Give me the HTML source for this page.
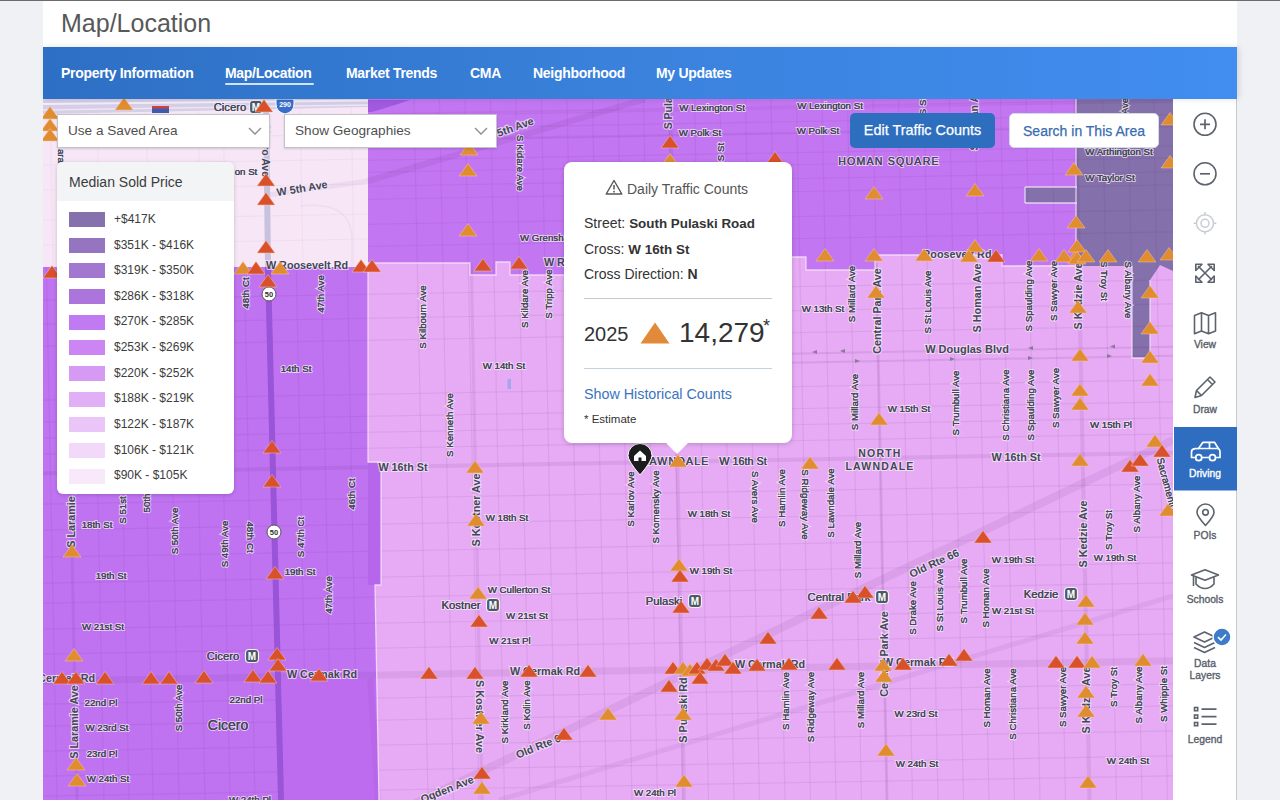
<!DOCTYPE html>
<html><head><meta charset="utf-8">
<style>
*{margin:0;padding:0;box-sizing:border-box}
html,body{width:1280px;height:800px;overflow:hidden;background:#eff1f4;font-family:"Liberation Sans",sans-serif}
#topline{position:absolute;left:0;top:0;width:1280px;height:1px;background:#6b6b6b}
#header{position:absolute;left:43px;top:1px;width:1194px;height:46px;background:#fff}
#title{position:absolute;left:18px;top:8px;font-size:25px;color:#585858;white-space:nowrap}
#nav{position:absolute;left:43px;top:47px;width:1194px;height:52px;background:linear-gradient(90deg,#2d6fc4 0%,#3a82dc 50%,#418df0 100%);box-shadow:2px 0 6px rgba(0,0,0,.12);z-index:2}
.nv{position:absolute;top:18px;font-size:14px;font-weight:bold;color:#fff;letter-spacing:-0.3px;white-space:nowrap}
#ul{position:absolute;left:182px;top:36px;width:89px;height:2px;background:#cfe2ff;border-radius:1px}
#map{position:absolute;left:43px;top:99px;width:1130px;height:701px;overflow:hidden;background:#e6abf4}
#map svg{position:absolute;left:-43px;top:-99px}
#map text.h{fill:#434756;stroke:#f8eefb;stroke-width:2.2px;stroke-opacity:.7;paint-order:stroke;text-anchor:middle;dominant-baseline:central}
#map text.m{fill:#434756;stroke:#434756;stroke-width:.15px;text-anchor:middle;dominant-baseline:central}
#side{position:absolute;left:1173px;top:99px;width:64px;height:701px;background:#fff;border-right:1px solid #c9c9cf}
.dd{position:absolute;top:114px;height:34px;background:#fff;border:1px solid #c4c4c8;box-shadow:0 1px 2px rgba(0,0,0,.15);font-size:13.6px;color:#505050;padding:8px 0 0 10px;white-space:nowrap}
.btn{position:absolute;top:113px;height:35px;border-radius:5px;font-size:15px;-webkit-text-stroke:.25px currentColor;white-space:nowrap;text-align:center;padding-top:9px}
#legend{position:absolute;left:57px;top:162px;width:177px;height:332px;background:#fff;border-radius:6px;box-shadow:0 1px 4px rgba(0,0,0,.18);overflow:hidden}
#lh{height:39px;background:#f3f4f6;font-size:14px;color:#3c3c3c;padding:12px 0 0 12px}
.lr{position:absolute;left:12px;height:15px;width:36px}
.lt{position:absolute;left:57px;font-size:12px;color:#3c3c3c;white-space:nowrap}
#pop{position:absolute;left:564px;top:162px;width:228px;height:281px;background:#fff;border-radius:8px;box-shadow:0 1px 5px rgba(0,0,0,.2)}
#pop .t{position:absolute;white-space:nowrap;color:#333}
.sl{position:absolute;width:64px;text-align:center;font-size:10.3px;color:#59606b;-webkit-text-stroke:0.35px currentColor}
</style></head>
<body>
<div id="topline"></div>
<div id="header"><div id="title">Map/Location</div></div>
<div id="nav">
<div class="nv" style="left:18px">Property Information</div>
<div class="nv" style="left:182px">Map/Location</div>
<div class="nv" style="left:303px">Market Trends</div>
<div class="nv" style="left:427px">CMA</div>
<div class="nv" style="left:490px">Neighborhood</div>
<div class="nv" style="left:613px">My Updates</div>
<div id="ul"></div>
</div>
<div id="map"><svg width="1280" height="800" viewBox="0 0 1280 800" font-family="Liberation Sans, sans-serif"><polygon points="43,99 368,99 368,267 43,267" fill="#f6e6f6" /><polygon points="368,99 1076,99 1076,265 1002,266 1002,255 875,255 875,270 806,270 806,257 700,257 564,262 564,275 510,275 510,262 496,262 496,275 470,275 470,263 368,263" fill="#c376f1" /><polygon points="1076,99 1173,99 1173,271 1160,265 1150,280 1150,358 1132,358 1132,266 1076,266" fill="#8470aa" /><polygon points="1025,187 1077,187 1077,203 1025,203" fill="#8470aa" /><polygon points="43,267 368,267 368,462 381,462 381,585 375,585 379,800 43,800" fill="#bf73f1" /><polygon points="282,678 375,678 378,800 282,800" fill="#bd6cef" /><polygon points="368,463 381,463 381,585 368,585" fill="#b566ea" /><g stroke="#6a2a8a" stroke-opacity="0.09" stroke-width="1.2"><line x1="413.98" y1="99" x2="428" y2="800"/><line x1="439.48" y1="99" x2="453.5" y2="800"/><line x1="464.98" y1="99" x2="479" y2="800"/><line x1="490.48" y1="99" x2="504.5" y2="800"/><line x1="515.98" y1="99" x2="530" y2="800"/><line x1="541.48" y1="99" x2="555.5" y2="800"/><line x1="566.98" y1="99" x2="581" y2="800"/><line x1="592.48" y1="99" x2="606.5" y2="800"/><line x1="617.98" y1="99" x2="632" y2="800"/><line x1="643.48" y1="99" x2="657.5" y2="800"/><line x1="668.98" y1="99" x2="683" y2="800"/><line x1="694.48" y1="99" x2="708.5" y2="800"/><line x1="719.98" y1="99" x2="734" y2="800"/><line x1="745.48" y1="99" x2="759.5" y2="800"/><line x1="770.98" y1="99" x2="785" y2="800"/><line x1="796.48" y1="99" x2="810.5" y2="800"/><line x1="821.98" y1="99" x2="836" y2="800"/><line x1="847.48" y1="99" x2="861.5" y2="800"/><line x1="872.98" y1="99" x2="887" y2="800"/><line x1="898.48" y1="99" x2="912.5" y2="800"/><line x1="923.98" y1="99" x2="938" y2="800"/><line x1="949.48" y1="99" x2="963.5" y2="800"/><line x1="974.98" y1="99" x2="989" y2="800"/><line x1="1000.48" y1="99" x2="1014.5" y2="800"/><line x1="1025.98" y1="99" x2="1040" y2="800"/><line x1="1051.48" y1="99" x2="1065.5" y2="800"/><line x1="1076.98" y1="99" x2="1091" y2="800"/><line x1="1102.48" y1="99" x2="1116.5" y2="800"/><line x1="1127.98" y1="99" x2="1142" y2="800"/><line x1="1153.48" y1="99" x2="1167.5" y2="800"/><line x1="1178.98" y1="99" x2="1193" y2="800"/><line x1="42.98" y1="99" x2="57" y2="800"/><line x1="89.98" y1="99" x2="104" y2="800"/><line x1="114.98" y1="99" x2="129" y2="800"/><line x1="138.98" y1="99" x2="153" y2="800"/><line x1="164.98" y1="99" x2="179" y2="800"/><line x1="190.98" y1="99" x2="205" y2="800"/><line x1="215.98" y1="99" x2="230" y2="800"/><line x1="240.98" y1="99" x2="255" y2="800"/><line x1="292.98" y1="99" x2="307" y2="800"/><line x1="317.98" y1="99" x2="332" y2="800"/><line x1="343.98" y1="99" x2="358" y2="800"/><line x1="43" y1="122.17" x2="1173" y2="101.83"/><line x1="43" y1="135.17" x2="1173" y2="114.83"/><line x1="43" y1="147.17" x2="1173" y2="126.83"/><line x1="43" y1="166.17" x2="1173" y2="145.83"/><line x1="43" y1="178.17" x2="1173" y2="157.83"/><line x1="43" y1="192.17" x2="1173" y2="171.83"/><line x1="43" y1="205.17" x2="1173" y2="184.83"/><line x1="43" y1="230.17" x2="1173" y2="209.83"/><line x1="43" y1="252.17" x2="1173" y2="231.83"/><line x1="43" y1="300.17" x2="1173" y2="279.83"/><line x1="43" y1="324.17" x2="1173" y2="303.83"/><line x1="43" y1="346.17" x2="1173" y2="325.83"/><line x1="43" y1="400.17" x2="1173" y2="379.83"/><line x1="43" y1="422.17" x2="1173" y2="401.83"/><line x1="43" y1="438.17" x2="1173" y2="417.83"/><line x1="43" y1="454.17" x2="1173" y2="433.83"/><line x1="43" y1="504.17" x2="1173" y2="483.83"/><line x1="43" y1="530.17" x2="1173" y2="509.83"/><line x1="43" y1="557.17" x2="1173" y2="536.83"/><line x1="43" y1="583.17" x2="1173" y2="562.83"/><line x1="43" y1="603.17" x2="1173" y2="582.83"/><line x1="43" y1="629.17" x2="1173" y2="608.83"/><line x1="43" y1="654.17" x2="1173" y2="633.83"/><line x1="43" y1="704.17" x2="1173" y2="683.83"/><line x1="43" y1="726.17" x2="1173" y2="705.83"/><line x1="43" y1="751.17" x2="1173" y2="730.83"/><line x1="43" y1="776.17" x2="1173" y2="755.83"/><line x1="43" y1="796.17" x2="1173" y2="775.83"/></g><line x1="43" y1="473.17" x2="1173" y2="452.83" stroke="#6a2a8a" stroke-width="4" stroke-opacity="0.1" /><line x1="43" y1="681.17" x2="1173" y2="660.83" stroke="#6a2a8a" stroke-width="7" stroke-opacity="0.09" /><line x1="700" y1="355.344" x2="1173" y2="346.83" stroke="#6a2a8a" stroke-width="2" stroke-opacity="0.12" /><line x1="700" y1="364.344" x2="1173" y2="355.83" stroke="#6a2a8a" stroke-width="2" stroke-opacity="0.12" /><line x1="471.26" y1="263" x2="482" y2="800" stroke="#6a2a8a" stroke-width="3" stroke-opacity="0.1" /><line x1="669.98" y1="99" x2="684" y2="800" stroke="#6a2a8a" stroke-width="4" stroke-opacity="0.1" /><line x1="876.26" y1="263" x2="887" y2="800" stroke="#6a2a8a" stroke-width="3" stroke-opacity="0.1" /><line x1="1074.98" y1="99" x2="1089" y2="800" stroke="#6a2a8a" stroke-width="3" stroke-opacity="0.1" /><line x1="66.34" y1="267" x2="77" y2="800" stroke="#6a2a8a" stroke-width="3" stroke-opacity="0.1" /><line x1="380" y1="820" x2="1173" y2="440" stroke="#6a2a8a" stroke-width="8" stroke-opacity="0.09" /><line x1="499" y1="800" x2="1173" y2="596" stroke="#6a2a8a" stroke-width="5" stroke-opacity="0.07" /><line x1="368" y1="114.32" x2="1173" y2="99.83" stroke="#6a2a8a" stroke-width="2" stroke-opacity="0.08" /><line x1="368" y1="140.32" x2="1173" y2="125.83" stroke="#6a2a8a" stroke-width="2" stroke-opacity="0.08" /><polygon points="282,678 375,678 378,800 282,800" fill="#bd6cef" /><polygon points="368,463 381,463 381,585 368,585" fill="#b566ea" /><line x1="370" y1="678" x2="378" y2="800" stroke="#6a2a8a" stroke-width="6" stroke-opacity="0.06" /><polygon points="43,99 368,99 368,267 43,267" fill="#f6e6f6" /><g stroke="#6a2a8a" stroke-opacity="0.035" stroke-width="1.2"><line x1="50" y1="99" x2="53" y2="267"/><line x1="97" y1="99" x2="100" y2="267"/><line x1="146" y1="99" x2="149" y2="267"/><line x1="198" y1="99" x2="201" y2="267"/><line x1="223" y1="99" x2="226" y2="267"/><line x1="300" y1="99" x2="303" y2="267"/><line x1="351" y1="99" x2="354" y2="267"/><line x1="43" y1="140" x2="368" y2="134"/><line x1="43" y1="165" x2="368" y2="159"/><line x1="43" y1="190" x2="368" y2="184"/><line x1="43" y1="220" x2="368" y2="214"/><line x1="43" y1="245" x2="368" y2="239"/></g><path d="M300 206Q352 200 352 240V267" fill="none" stroke="#6a2a8a" stroke-opacity="0.05" stroke-width="1.5"/><line x1="268" y1="195" x2="368" y2="181" stroke="#6a2a8a" stroke-opacity="0.06" stroke-width="5"/><line x1="368" y1="181" x2="645" y2="99" stroke="#6a2a8a" stroke-opacity="0.11" stroke-width="6"/><polyline points="368,263 470,263 470,275 496,275 496,262 510,262 510,275 564,275" fill="none" stroke="#f6e6fa" stroke-opacity="0.8" stroke-width="1.3"/><polyline points="792,257 806,257 806,270 875,270 875,255 1002,255 1002,266 1076,266 1076,99" fill="none" stroke="#f6e6fa" stroke-opacity="0.8" stroke-width="1.3"/><polyline points="368,267 368,462 381,462 381,585 375,585 379,800" fill="none" stroke="#f6e6fa" stroke-opacity="0.8" stroke-width="1.3"/><polyline points="1025,187 1077,187" fill="none" stroke="#f6e6fa" stroke-opacity="0.8" stroke-width="1.3"/><polyline points="1025,203 1077,203" fill="none" stroke="#f6e6fa" stroke-opacity="0.8" stroke-width="1.3"/><polyline points="1025,187 1025,203" fill="none" stroke="#f6e6fa" stroke-opacity="0.8" stroke-width="1.3"/><polyline points="1132,266 1132,358 1150,358 1150,280" fill="none" stroke="#f6e6fa" stroke-opacity="0.8" stroke-width="1.3"/><rect x="507.5" y="379" width="3.5" height="10" fill="#a4a6ee"/><path d="M812 352l5 -2v4z" fill="#8a7a9a"/><path d="M840 351l5 -2v4z" fill="#8a7a9a"/><path d="M930 349.5l5 -2v4z" fill="#8a7a9a"/><path d="M1028 348l5 -2v4z" fill="#8a7a9a"/><path d="M860 361l-5 -2v4z" fill="#8a7a9a"/><path d="M955 359l-5 -2v4z" fill="#8a7a9a"/><path d="M1033 358l-5 -2v4z" fill="#8a7a9a"/><path d="M1110 346.5l5 -2v4z" fill="#8a7a9a"/><path d="M1112 356l-5 -2v4z" fill="#8a7a9a"/><line x1="266" y1="99" x2="268" y2="267" stroke="#c9c2de" stroke-width="6"/><line x1="268" y1="267" x2="281" y2="800" stroke="#9a54d8" stroke-width="6"/><polygon points="368,100 410,100 395,105 372,112 368,112" fill="#9a55dc" fill-opacity="0.85"/><polygon points="43,99 368,99 368,107 43,114" fill="#d6cde6"/><line x1="43" y1="104" x2="368" y2="100.5" stroke="#f2eef8" stroke-width="2"/><line x1="43" y1="110" x2="368" y2="105" stroke="#ece6f4" stroke-width="1.5"/><text class="h" x="230" y="107" font-size="11.3">Cicero</text><text class="m" x="230" y="107" font-size="11.3">Cicero</text><text class="h" x="246" y="171" font-size="9.7">on St</text><text class="m" x="246" y="171" font-size="9.7">on St</text><text class="h" x="302" y="188" font-size="10.8" font-weight="bold" transform="rotate(-9 302 188)">W 5th Ave</text><text class="h" x="266" y="150" font-size="10.5" font-weight="bold" transform="rotate(90 266 150)">Cicero Ave</text><text class="h" x="61" y="156" font-size="9.7" transform="rotate(90 61 156)">ara</text><text class="m" x="61" y="156" font-size="9.7" transform="rotate(90 61 156)">ara</text><text class="h" x="307" y="265" font-size="10.8" font-weight="bold">W Roosevelt Rd</text><text class="h" x="245" y="293" font-size="9.7" transform="rotate(-90 245 293)">48th Ct</text><text class="m" x="245" y="293" font-size="9.7" transform="rotate(-90 245 293)">48th Ct</text><text class="h" x="320" y="294" font-size="9.7" transform="rotate(-90 320 294)">47th Ave</text><text class="m" x="320" y="294" font-size="9.7" transform="rotate(-90 320 294)">47th Ave</text><text class="h" x="422" y="317" font-size="9.7" transform="rotate(-90 422 317)">S Kilbourn Ave</text><text class="m" x="422" y="317" font-size="9.7" transform="rotate(-90 422 317)">S Kilbourn Ave</text><text class="h" x="520" y="163" font-size="9.7" transform="rotate(90 520 163)">S Kidare Ave</text><text class="m" x="520" y="163" font-size="9.7" transform="rotate(90 520 163)">S Kidare Ave</text><text class="h" x="509" y="129" font-size="10.8" font-weight="bold" transform="rotate(-20 509 129)">W 5th Ave</text><text class="h" x="668" y="106" font-size="10.5" font-weight="bold" transform="rotate(-90 668 106)">S Pulaski</text><text class="h" x="712" y="107" font-size="9.7">W Lexington St</text><text class="m" x="712" y="107" font-size="9.7">W Lexington St</text><text class="h" x="700" y="132" font-size="9.7">W Polk St</text><text class="m" x="700" y="132" font-size="9.7">W Polk St</text><text class="h" x="720" y="152" font-size="9.7" transform="rotate(-90 720 152)">S St</text><text class="m" x="720" y="152" font-size="9.7" transform="rotate(-90 720 152)">S St</text><text class="h" x="830" y="105" font-size="9.7">W Lexington St</text><text class="m" x="830" y="105" font-size="9.7">W Lexington St</text><text class="h" x="818" y="130" font-size="9.7">W Polk St</text><text class="m" x="818" y="130" font-size="9.7">W Polk St</text><text class="h" x="889" y="161" font-size="10.6" letter-spacing="1.2">HOMAN SQUARE</text><text class="m" x="889" y="161" font-size="10.6" letter-spacing="1.2">HOMAN SQUARE</text><text class="h" x="1119" y="151" font-size="9.7">W Arthington St</text><text class="m" x="1119" y="151" font-size="9.7">W Arthington St</text><text class="h" x="1110" y="177" font-size="9.7">W Taylor St</text><text class="m" x="1110" y="177" font-size="9.7">W Taylor St</text><text class="h" x="922" y="106" font-size="9.7" transform="rotate(-90 922 106)">S St</text><text class="m" x="922" y="106" font-size="9.7" transform="rotate(-90 922 106)">S St</text><text class="h" x="974" y="120" font-size="10.5" font-weight="bold" transform="rotate(-90 974 120)">S Homan Av</text><text class="h" x="1124" y="106" font-size="9.7" transform="rotate(-90 1124 106)">Ave</text><text class="m" x="1124" y="106" font-size="9.7" transform="rotate(-90 1124 106)">Ave</text><text class="h" x="548" y="237" font-size="9.7">W Grenshaw</text><text class="m" x="548" y="237" font-size="9.7">W Grenshaw</text><text class="h" x="585" y="262" font-size="10.8" font-weight="bold">W Roosevelt Rd</text><text class="h" x="957" y="254" font-size="10.8" font-weight="bold">Roosevelt Rd</text><text class="h" x="524" y="299" font-size="9.7" transform="rotate(-90 524 299)">S Kildare Ave</text><text class="m" x="524" y="299" font-size="9.7" transform="rotate(-90 524 299)">S Kildare Ave</text><text class="h" x="548" y="294" font-size="9.7" transform="rotate(-90 548 294)">S Tripp Ave</text><text class="m" x="548" y="294" font-size="9.7" transform="rotate(-90 548 294)">S Tripp Ave</text><text class="h" x="504" y="365" font-size="9.7">W 14th St</text><text class="m" x="504" y="365" font-size="9.7">W 14th St</text><text class="h" x="449" y="425" font-size="9.7" transform="rotate(-90 449 425)">S Kenneth Ave</text><text class="m" x="449" y="425" font-size="9.7" transform="rotate(-90 449 425)">S Kenneth Ave</text><text class="h" x="403" y="467" font-size="10.8" font-weight="bold">W 16th St</text><text class="h" x="823" y="308" font-size="9.7">W 13th St</text><text class="m" x="823" y="308" font-size="9.7">W 13th St</text><text class="h" x="851" y="294" font-size="9.7" transform="rotate(-90 851 294)">S Millard Ave</text><text class="m" x="851" y="294" font-size="9.7" transform="rotate(-90 851 294)">S Millard Ave</text><text class="h" x="877" y="311" font-size="10.8" font-weight="bold" transform="rotate(-90 877 311)">Central Park Ave</text><text class="h" x="927" y="302" font-size="9.7" transform="rotate(-90 927 302)">S St Louis Ave</text><text class="m" x="927" y="302" font-size="9.7" transform="rotate(-90 927 302)">S St Louis Ave</text><text class="h" x="977" y="298" font-size="10.8" font-weight="bold" transform="rotate(-90 977 298)">S Homan Ave</text><text class="h" x="1028" y="296" font-size="9.7" transform="rotate(-90 1028 296)">S Spaulding Ave</text><text class="m" x="1028" y="296" font-size="9.7" transform="rotate(-90 1028 296)">S Spaulding Ave</text><text class="h" x="1053" y="291" font-size="9.7" transform="rotate(-90 1053 291)">S Sawyer Ave</text><text class="m" x="1053" y="291" font-size="9.7" transform="rotate(-90 1053 291)">S Sawyer Ave</text><text class="h" x="1078" y="296" font-size="10.8" font-weight="bold" transform="rotate(-90 1078 296)">S Kedzie Ave</text><text class="h" x="1104" y="281" font-size="9.7" transform="rotate(90 1104 281)">S Troy St</text><text class="m" x="1104" y="281" font-size="9.7" transform="rotate(90 1104 281)">S Troy St</text><text class="h" x="1128.6" y="290" font-size="9.7" transform="rotate(90 1128.6 290)">S Albany Ave</text><text class="m" x="1128.6" y="290" font-size="9.7" transform="rotate(90 1128.6 290)">S Albany Ave</text><text class="h" x="967" y="349" font-size="11" font-weight="bold">W Douglas Blvd</text><text class="h" x="854" y="402" font-size="9.7" transform="rotate(-90 854 402)">S Millard Ave</text><text class="m" x="854" y="402" font-size="9.7" transform="rotate(-90 854 402)">S Millard Ave</text><text class="h" x="909" y="408" font-size="9.7">W 15th St</text><text class="m" x="909" y="408" font-size="9.7">W 15th St</text><text class="h" x="955" y="403" font-size="9.7" transform="rotate(-90 955 403)">S Trumbull Ave</text><text class="m" x="955" y="403" font-size="9.7" transform="rotate(-90 955 403)">S Trumbull Ave</text><text class="h" x="1005" y="405" font-size="9.7" transform="rotate(-90 1005 405)">S Christiana Ave</text><text class="m" x="1005" y="405" font-size="9.7" transform="rotate(-90 1005 405)">S Christiana Ave</text><text class="h" x="1030" y="405" font-size="9.7" transform="rotate(-90 1030 405)">S Spaulding Ave</text><text class="m" x="1030" y="405" font-size="9.7" transform="rotate(-90 1030 405)">S Spaulding Ave</text><text class="h" x="1055" y="398" font-size="9.7" transform="rotate(-90 1055 398)">S Sawyer Ave</text><text class="m" x="1055" y="398" font-size="9.7" transform="rotate(-90 1055 398)">S Sawyer Ave</text><text class="h" x="1111" y="424" font-size="9.7">W 15th Pl</text><text class="m" x="1111" y="424" font-size="9.7">W 15th Pl</text><text class="h" x="880" y="453" font-size="10.5" font-weight="bold" letter-spacing="1.2">NORTH</text><text class="h" x="880" y="466" font-size="10.5" font-weight="bold" letter-spacing="1.2">LAWNDALE</text><text class="h" x="1016" y="457" font-size="10.8" font-weight="bold">W 16th St</text><text class="h" x="805" y="504.5" font-size="9.7" transform="rotate(90 805 504.5)">S Ridgeway Ave</text><text class="m" x="805" y="504.5" font-size="9.7" transform="rotate(90 805 504.5)">S Ridgeway Ave</text><text class="h" x="830" y="503" font-size="9.7" transform="rotate(-90 830 503)">S Lawndale Ave</text><text class="m" x="830" y="503" font-size="9.7" transform="rotate(-90 830 503)">S Lawndale Ave</text><text class="h" x="781" y="498" font-size="9.7" transform="rotate(-90 781 498)">S Hamlin Ave</text><text class="m" x="781" y="498" font-size="9.7" transform="rotate(-90 781 498)">S Hamlin Ave</text><text class="h" x="857" y="550" font-size="9.7" transform="rotate(-90 857 550)">S Millard Ave</text><text class="m" x="857" y="550" font-size="9.7" transform="rotate(-90 857 550)">S Millard Ave</text><text class="h" x="934" y="563" font-size="10.8" font-weight="bold" transform="rotate(-25 934 563)">Old Rte 66</text><text class="h" x="1013" y="559" font-size="9.7">W 19th St</text><text class="m" x="1013" y="559" font-size="9.7">W 19th St</text><text class="h" x="1083" y="534" font-size="10.8" font-weight="bold" transform="rotate(-90 1083 534)">S Kedzie Ave</text><text class="h" x="1108" y="530" font-size="9.7" transform="rotate(-90 1108 530)">S Troy St</text><text class="m" x="1108" y="530" font-size="9.7" transform="rotate(-90 1108 530)">S Troy St</text><text class="h" x="1136" y="504" font-size="9.7" transform="rotate(-90 1136 504)">S Albany Ave</text><text class="m" x="1136" y="504" font-size="9.7" transform="rotate(-90 1136 504)">S Albany Ave</text><text class="h" x="1115" y="557" font-size="9.7">W 19th St</text><text class="m" x="1115" y="557" font-size="9.7">W 19th St</text><text class="h" x="1167" y="484" font-size="10" transform="rotate(75 1167 484)">Sacramento</text><text class="m" x="1167" y="484" font-size="10" transform="rotate(75 1167 484)">Sacramento</text><text class="h" x="71" y="511" font-size="10.8" font-weight="bold" transform="rotate(-90 71 511)">S Laramie Ave</text><text class="h" x="122" y="510" font-size="9.7" transform="rotate(-90 122 510)">S 51st</text><text class="m" x="122" y="510" font-size="9.7" transform="rotate(-90 122 510)">S 51st</text><text class="h" x="146" y="503" font-size="9.7" transform="rotate(-90 146 503)">50th</text><text class="m" x="146" y="503" font-size="9.7" transform="rotate(-90 146 503)">50th</text><text class="h" x="97" y="524" font-size="9.7">18th St</text><text class="m" x="97" y="524" font-size="9.7">18th St</text><text class="h" x="174" y="531" font-size="9.7" transform="rotate(-90 174 531)">S 50th Ave</text><text class="m" x="174" y="531" font-size="9.7" transform="rotate(-90 174 531)">S 50th Ave</text><text class="h" x="224" y="544" font-size="9.7" transform="rotate(-90 224 544)">S 49th Ave</text><text class="m" x="224" y="544" font-size="9.7" transform="rotate(-90 224 544)">S 49th Ave</text><text class="h" x="250" y="537" font-size="9.7" transform="rotate(90 250 537)">48th Ct</text><text class="m" x="250" y="537" font-size="9.7" transform="rotate(90 250 537)">48th Ct</text><text class="h" x="300" y="537" font-size="9.7" transform="rotate(-90 300 537)">S 47th Ct</text><text class="m" x="300" y="537" font-size="9.7" transform="rotate(-90 300 537)">S 47th Ct</text><text class="h" x="351" y="494" font-size="9.7" transform="rotate(-90 351 494)">46th Ct</text><text class="m" x="351" y="494" font-size="9.7" transform="rotate(-90 351 494)">46th Ct</text><text class="h" x="296" y="368" font-size="9.7">14th St</text><text class="m" x="296" y="368" font-size="9.7">14th St</text><text class="h" x="111" y="575" font-size="9.7">19th St</text><text class="m" x="111" y="575" font-size="9.7">19th St</text><text class="h" x="300" y="571" font-size="9.7">19th St</text><text class="m" x="300" y="571" font-size="9.7">19th St</text><text class="h" x="328" y="595" font-size="9.7" transform="rotate(-90 328 595)">47th Ave</text><text class="m" x="328" y="595" font-size="9.7" transform="rotate(-90 328 595)">47th Ave</text><text class="h" x="103" y="626" font-size="9.7">W 21st St</text><text class="m" x="103" y="626" font-size="9.7">W 21st St</text><text class="h" x="223" y="656" font-size="11.3">Cicero</text><text class="m" x="223" y="656" font-size="11.3">Cicero</text><text class="h" x="322" y="674" font-size="10.8" font-weight="bold">W Cermak Rd</text><text class="h" x="60" y="678" font-size="10.8" font-weight="bold">W Cermak Rd</text><text class="h" x="101" y="702" font-size="9.7">22nd Pl</text><text class="m" x="101" y="702" font-size="9.7">22nd Pl</text><text class="h" x="246" y="699" font-size="9.7">22nd Pl</text><text class="m" x="246" y="699" font-size="9.7">22nd Pl</text><text class="h" x="178" y="708" font-size="9.7" transform="rotate(-90 178 708)">S 50th Ave</text><text class="m" x="178" y="708" font-size="9.7" transform="rotate(-90 178 708)">S 50th Ave</text><text class="h" x="74" y="722" font-size="10.8" font-weight="bold" transform="rotate(-90 74 722)">S Laramie Ave</text><text class="h" x="228" y="725" font-size="14">Cicero</text><text class="m" x="228" y="725" font-size="14">Cicero</text><text class="h" x="107" y="727" font-size="9.7">W 23rd St</text><text class="m" x="107" y="727" font-size="9.7">W 23rd St</text><text class="h" x="102" y="753" font-size="9.7">23rd Pl</text><text class="m" x="102" y="753" font-size="9.7">23rd Pl</text><text class="h" x="108" y="778" font-size="9.7">W 24th St</text><text class="m" x="108" y="778" font-size="9.7">W 24th St</text><text class="h" x="250" y="799" font-size="9.7">W 24th Pl</text><text class="m" x="250" y="799" font-size="9.7">W 24th Pl</text><text class="h" x="476" y="510" font-size="10.8" font-weight="bold" transform="rotate(-90 476 510)">S Kostner Ave</text><text class="h" x="507" y="517" font-size="9.7">W 18th St</text><text class="m" x="507" y="517" font-size="9.7">W 18th St</text><text class="h" x="630" y="499" font-size="9.7" transform="rotate(-90 630 499)">S Karlov Ave</text><text class="m" x="630" y="499" font-size="9.7" transform="rotate(-90 630 499)">S Karlov Ave</text><text class="h" x="655" y="507" font-size="9.7" transform="rotate(-90 655 507)">S Komensky Ave</text><text class="m" x="655" y="507" font-size="9.7" transform="rotate(-90 655 507)">S Komensky Ave</text><text class="h" x="676" y="461" font-size="10.5" letter-spacing="1.2">LAWNDALE</text><text class="m" x="676" y="461" font-size="10.5" letter-spacing="1.2">LAWNDALE</text><text class="h" x="743" y="461" font-size="10.8">W 16th St</text><text class="m" x="743" y="461" font-size="10.8">W 16th St</text><text class="h" x="755" y="497" font-size="9.7" transform="rotate(90 755 497)">S Avers Ave</text><text class="m" x="755" y="497" font-size="9.7" transform="rotate(90 755 497)">S Avers Ave</text><text class="h" x="709" y="513" font-size="9.7">W 18th St</text><text class="m" x="709" y="513" font-size="9.7">W 18th St</text><text class="h" x="711" y="570" font-size="9.7">W 19th St</text><text class="m" x="711" y="570" font-size="9.7">W 19th St</text><text class="h" x="519" y="589" font-size="9.7">W Cullerton St</text><text class="m" x="519" y="589" font-size="9.7">W Cullerton St</text><text class="h" x="461" y="605" font-size="11.3">Kostner</text><text class="m" x="461" y="605" font-size="11.3">Kostner</text><text class="h" x="527" y="615" font-size="9.7">W 21st St</text><text class="m" x="527" y="615" font-size="9.7">W 21st St</text><text class="h" x="510" y="640" font-size="9.7">W 21st Pl</text><text class="m" x="510" y="640" font-size="9.7">W 21st Pl</text><text class="h" x="664" y="601" font-size="11.3">Pulaski</text><text class="m" x="664" y="601" font-size="11.3">Pulaski</text><text class="h" x="545" y="671" font-size="10.8" font-weight="bold">W Cermak Rd</text><text class="h" x="770" y="664" font-size="10.8" font-weight="bold">W Cermak Rd</text><text class="h" x="480" y="716.5" font-size="10.8" font-weight="bold" transform="rotate(90 480 716.5)">S Kostner Ave</text><text class="h" x="504" y="712" font-size="9.7" transform="rotate(-90 504 712)">S Kirkland Ave</text><text class="m" x="504" y="712" font-size="9.7" transform="rotate(-90 504 712)">S Kirkland Ave</text><text class="h" x="526" y="705" font-size="9.7" transform="rotate(-90 526 705)">S Kolin Ave</text><text class="m" x="526" y="705" font-size="9.7" transform="rotate(-90 526 705)">S Kolin Ave</text><text class="h" x="541" y="745" font-size="10.8" font-weight="bold" transform="rotate(-22 541 745)">Old Rte 66</text><text class="h" x="447" y="789" font-size="10.8" font-weight="bold" transform="rotate(-22 447 789)">Ogden Ave</text><text class="h" x="683" y="710" font-size="10.8" font-weight="bold" transform="rotate(-90 683 710)">S Pulaski Rd</text><text class="h" x="655" y="792" font-size="9.7">W 24th Pl</text><text class="m" x="655" y="792" font-size="9.7">W 24th Pl</text><text class="h" x="912" y="608" font-size="9.7" transform="rotate(-90 912 608)">S Drake Ave</text><text class="m" x="912" y="608" font-size="9.7" transform="rotate(-90 912 608)">S Drake Ave</text><text class="h" x="939" y="600" font-size="9.7" transform="rotate(-90 939 600)">S St Louis Ave</text><text class="m" x="939" y="600" font-size="9.7" transform="rotate(-90 939 600)">S St Louis Ave</text><text class="h" x="963" y="591" font-size="9.7" transform="rotate(-90 963 591)">S Trumbull Ave</text><text class="m" x="963" y="591" font-size="9.7" transform="rotate(-90 963 591)">S Trumbull Ave</text><text class="h" x="985" y="598" font-size="9.7" transform="rotate(-90 985 598)">S Homan Ave</text><text class="m" x="985" y="598" font-size="9.7" transform="rotate(-90 985 598)">S Homan Ave</text><text class="h" x="1013" y="610" font-size="9.7">W 21st St</text><text class="m" x="1013" y="610" font-size="9.7">W 21st St</text><text class="h" x="839" y="597" font-size="11.3">Central Park</text><text class="m" x="839" y="597" font-size="11.3">Central Park</text><text class="h" x="1041" y="594" font-size="11.3">Kedzie</text><text class="m" x="1041" y="594" font-size="11.3">Kedzie</text><text class="h" x="884" y="654" font-size="10.8" font-weight="bold" transform="rotate(-90 884 654)">Central Park Ave</text><text class="h" x="918" y="662" font-size="10.8" font-weight="bold">W Cermak Rd</text><text class="h" x="785" y="701" font-size="9.7" transform="rotate(-90 785 701)">S Hamlin Ave</text><text class="m" x="785" y="701" font-size="9.7" transform="rotate(-90 785 701)">S Hamlin Ave</text><text class="h" x="810" y="707" font-size="9.7" transform="rotate(-90 810 707)">S Ridgeway Ave</text><text class="m" x="810" y="707" font-size="9.7" transform="rotate(-90 810 707)">S Ridgeway Ave</text><text class="h" x="860" y="700" font-size="9.7" transform="rotate(-90 860 700)">S Millard Ave</text><text class="m" x="860" y="700" font-size="9.7" transform="rotate(-90 860 700)">S Millard Ave</text><text class="h" x="916" y="713" font-size="9.7">W 23rd St</text><text class="m" x="916" y="713" font-size="9.7">W 23rd St</text><text class="h" x="986" y="698" font-size="9.7" transform="rotate(-90 986 698)">S Homan Ave</text><text class="m" x="986" y="698" font-size="9.7" transform="rotate(-90 986 698)">S Homan Ave</text><text class="h" x="1012" y="704" font-size="9.7" transform="rotate(-90 1012 704)">S Christiana Ave</text><text class="m" x="1012" y="704" font-size="9.7" transform="rotate(-90 1012 704)">S Christiana Ave</text><text class="h" x="1062" y="697" font-size="9.7" transform="rotate(-90 1062 697)">S Sawyer Ave</text><text class="m" x="1062" y="697" font-size="9.7" transform="rotate(-90 1062 697)">S Sawyer Ave</text><text class="h" x="1086" y="700" font-size="10.8" font-weight="bold" transform="rotate(-90 1086 700)">S Kedzie Ave</text><text class="h" x="1113" y="687" font-size="9.7" transform="rotate(-90 1113 687)">S Troy St</text><text class="m" x="1113" y="687" font-size="9.7" transform="rotate(-90 1113 687)">S Troy St</text><text class="h" x="1138" y="695" font-size="9.7" transform="rotate(-90 1138 695)">S Albany Ave</text><text class="m" x="1138" y="695" font-size="9.7" transform="rotate(-90 1138 695)">S Albany Ave</text><text class="h" x="1163" y="694" font-size="9.7" transform="rotate(-90 1163 694)">S Whipple St</text><text class="m" x="1163" y="694" font-size="9.7" transform="rotate(-90 1163 694)">S Whipple St</text><text class="h" x="917" y="763" font-size="9.7">W 24th St</text><text class="m" x="917" y="763" font-size="9.7">W 24th St</text><text class="h" x="1128" y="760" font-size="9.7">W 24th St</text><text class="m" x="1128" y="760" font-size="9.7">W 24th St</text><rect x="249.5" y="100.5" width="13" height="13" rx="3.5" fill="#4d5866" stroke="#f4ecf8" stroke-width="1.2"/><text x="256" y="107.5" font-size="10" font-weight="bold" fill="#fff" text-anchor="middle" dominant-baseline="central">M</text><rect x="245.5" y="649.5" width="13" height="13" rx="3.5" fill="#4d5866" stroke="#f4ecf8" stroke-width="1.2"/><text x="252" y="656.5" font-size="10" font-weight="bold" fill="#fff" text-anchor="middle" dominant-baseline="central">M</text><rect x="486.5" y="598.5" width="13" height="13" rx="3.5" fill="#4d5866" stroke="#f4ecf8" stroke-width="1.2"/><text x="493" y="605.5" font-size="10" font-weight="bold" fill="#fff" text-anchor="middle" dominant-baseline="central">M</text><rect x="688.5" y="594.5" width="13" height="13" rx="3.5" fill="#4d5866" stroke="#f4ecf8" stroke-width="1.2"/><text x="695" y="601.5" font-size="10" font-weight="bold" fill="#fff" text-anchor="middle" dominant-baseline="central">M</text><rect x="875.5" y="590.5" width="13" height="13" rx="3.5" fill="#4d5866" stroke="#f4ecf8" stroke-width="1.2"/><text x="882" y="597.5" font-size="10" font-weight="bold" fill="#fff" text-anchor="middle" dominant-baseline="central">M</text><rect x="1064.5" y="587.5" width="13" height="13" rx="3.5" fill="#4d5866" stroke="#f4ecf8" stroke-width="1.2"/><text x="1071" y="594.5" font-size="10" font-weight="bold" fill="#fff" text-anchor="middle" dominant-baseline="central">M</text><circle cx="269" cy="294" r="7" fill="#fff" stroke="#555" stroke-width="1"/><text x="269" y="294.5" font-size="7.5" font-weight="bold" fill="#333" text-anchor="middle" dominant-baseline="central">50</text><circle cx="274" cy="532" r="7" fill="#fff" stroke="#555" stroke-width="1"/><text x="274" y="532.5" font-size="7.5" font-weight="bold" fill="#333" text-anchor="middle" dominant-baseline="central">50</text><path d="M276 99H294V104Q294 112 285 114Q276 112 276 104Z" fill="#3b6ec8" stroke="#fff" stroke-width="1"/><text x="285" y="104" font-size="7" font-weight="bold" fill="#fff" text-anchor="middle" dominant-baseline="central">290</text><rect x="152" y="106" width="17" height="7" fill="#3b5fb0"/><rect x="152" y="106" width="17" height="2.5" fill="#d04040"/><polygon points="124,97.5 133,110 115,110" fill="#e08d30" stroke="#f7c9a8" stroke-opacity="0.6" stroke-width="0.8"/><polygon points="264,99.5 273,112 255,112" fill="#d8512b" stroke="#f7c9a8" stroke-opacity="0.6" stroke-width="0.8"/><polygon points="50,106.5 59,119 41,119" fill="#e08d30" stroke="#f7c9a8" stroke-opacity="0.6" stroke-width="0.8"/><polygon points="50,118.5 59,131 41,131" fill="#e08d30" stroke="#f7c9a8" stroke-opacity="0.6" stroke-width="0.8"/><polygon points="50,128.5 59,141 41,141" fill="#e08d30" stroke="#f7c9a8" stroke-opacity="0.6" stroke-width="0.8"/><polygon points="266,173.5 275,186 257,186" fill="#d8512b" stroke="#f7c9a8" stroke-opacity="0.6" stroke-width="0.8"/><polygon points="266,192.5 275,205 257,205" fill="#d8512b" stroke="#f7c9a8" stroke-opacity="0.6" stroke-width="0.8"/><polygon points="266,240.5 275,253 257,253" fill="#d8512b" stroke="#f7c9a8" stroke-opacity="0.6" stroke-width="0.8"/><polygon points="243,261.5 252,274 234,274" fill="#e08d30" stroke="#f7c9a8" stroke-opacity="0.6" stroke-width="0.8"/><polygon points="256,261.5 265,274 247,274" fill="#d8512b" stroke="#f7c9a8" stroke-opacity="0.6" stroke-width="0.8"/><polygon points="280,261.5 289,274 271,274" fill="#e08d30" stroke="#f7c9a8" stroke-opacity="0.6" stroke-width="0.8"/><polygon points="268,274.5 277,287 259,287" fill="#d8512b" stroke="#f7c9a8" stroke-opacity="0.6" stroke-width="0.8"/><polygon points="361,259.5 370,272 352,272" fill="#d8512b" stroke="#f7c9a8" stroke-opacity="0.6" stroke-width="0.8"/><polygon points="372,259.5 381,272 363,272" fill="#d8512b" stroke="#f7c9a8" stroke-opacity="0.6" stroke-width="0.8"/><polygon points="52,265.5 61,278 43,278" fill="#d8512b" stroke="#f7c9a8" stroke-opacity="0.6" stroke-width="0.8"/><polygon points="670,135.5 679,148 661,148" fill="#d8512b" stroke="#f7c9a8" stroke-opacity="0.6" stroke-width="0.8"/><polygon points="670,153.5 679,166 661,166" fill="#e08d30" stroke="#f7c9a8" stroke-opacity="0.6" stroke-width="0.8"/><polygon points="775,151.5 784,164 766,164" fill="#d8512b" stroke="#f7c9a8" stroke-opacity="0.6" stroke-width="0.8"/><polygon points="469,142.5 478,155 460,155" fill="#e08d30" stroke="#f7c9a8" stroke-opacity="0.6" stroke-width="0.8"/><polygon points="468,163.5 477,176 459,176" fill="#e08d30" stroke="#f7c9a8" stroke-opacity="0.6" stroke-width="0.8"/><polygon points="468,223.5 477,236 459,236" fill="#e08d30" stroke="#f7c9a8" stroke-opacity="0.6" stroke-width="0.8"/><polygon points="483,258.5 492,271 474,271" fill="#d8512b" stroke="#f7c9a8" stroke-opacity="0.6" stroke-width="0.8"/><polygon points="519,256.5 528,269 510,269" fill="#d8512b" stroke="#f7c9a8" stroke-opacity="0.6" stroke-width="0.8"/><polygon points="874,186.5 883,199 865,199" fill="#e08d30" stroke="#f7c9a8" stroke-opacity="0.6" stroke-width="0.8"/><polygon points="975,183.5 984,196 966,196" fill="#e08d30" stroke="#f7c9a8" stroke-opacity="0.6" stroke-width="0.8"/><polygon points="1074,162.5 1083,175 1065,175" fill="#e08d30" stroke="#f7c9a8" stroke-opacity="0.6" stroke-width="0.8"/><polygon points="1076,215.5 1085,228 1067,228" fill="#e08d30" stroke="#f7c9a8" stroke-opacity="0.6" stroke-width="0.8"/><polygon points="1076,249.5 1085,262 1067,262" fill="#e08d30" stroke="#f7c9a8" stroke-opacity="0.6" stroke-width="0.8"/><polygon points="1170,112.5 1179,125 1161,125" fill="#e08d30" stroke="#f7c9a8" stroke-opacity="0.6" stroke-width="0.8"/><polygon points="1170,155.5 1179,168 1161,168" fill="#e08d30" stroke="#f7c9a8" stroke-opacity="0.6" stroke-width="0.8"/><polygon points="825,248.5 834,261 816,261" fill="#e08d30" stroke="#f7c9a8" stroke-opacity="0.6" stroke-width="0.8"/><polygon points="874,248.5 883,261 865,261" fill="#e08d30" stroke="#f7c9a8" stroke-opacity="0.6" stroke-width="0.8"/><polygon points="924,248.5 933,261 915,261" fill="#e08d30" stroke="#f7c9a8" stroke-opacity="0.6" stroke-width="0.8"/><polygon points="975,239.5 984,252 966,252" fill="#e08d30" stroke="#f7c9a8" stroke-opacity="0.6" stroke-width="0.8"/><polygon points="969,249.5 978,262 960,262" fill="#e08d30" stroke="#f7c9a8" stroke-opacity="0.6" stroke-width="0.8"/><polygon points="996,249.5 1005,262 987,262" fill="#d8512b" stroke="#f7c9a8" stroke-opacity="0.6" stroke-width="0.8"/><polygon points="1039,248.5 1048,261 1030,261" fill="#e08d30" stroke="#f7c9a8" stroke-opacity="0.6" stroke-width="0.8"/><polygon points="1064,249.5 1073,262 1055,262" fill="#e08d30" stroke="#f7c9a8" stroke-opacity="0.6" stroke-width="0.8"/><polygon points="1077,239.5 1086,252 1068,252" fill="#e08d30" stroke="#f7c9a8" stroke-opacity="0.6" stroke-width="0.8"/><polygon points="1077,251.5 1086,264 1068,264" fill="#e08d30" stroke="#f7c9a8" stroke-opacity="0.6" stroke-width="0.8"/><polygon points="1086,249.5 1095,262 1077,262" fill="#e08d30" stroke="#f7c9a8" stroke-opacity="0.6" stroke-width="0.8"/><polygon points="1108,249.5 1117,262 1099,262" fill="#e08d30" stroke="#f7c9a8" stroke-opacity="0.6" stroke-width="0.8"/><polygon points="1147,249.5 1156,262 1138,262" fill="#e08d30" stroke="#f7c9a8" stroke-opacity="0.6" stroke-width="0.8"/><polygon points="1169,247.5 1178,260 1160,260" fill="#e08d30" stroke="#f7c9a8" stroke-opacity="0.6" stroke-width="0.8"/><polygon points="876,285.5 885,298 867,298" fill="#e08d30" stroke="#f7c9a8" stroke-opacity="0.6" stroke-width="0.8"/><polygon points="1078,300.5 1087,313 1069,313" fill="#e08d30" stroke="#f7c9a8" stroke-opacity="0.6" stroke-width="0.8"/><polygon points="1150,285.5 1159,298 1141,298" fill="#e08d30" stroke="#f7c9a8" stroke-opacity="0.6" stroke-width="0.8"/><polygon points="1150,321.5 1159,334 1141,334" fill="#e08d30" stroke="#f7c9a8" stroke-opacity="0.6" stroke-width="0.8"/><polygon points="1150,350.5 1159,363 1141,363" fill="#e08d30" stroke="#f7c9a8" stroke-opacity="0.6" stroke-width="0.8"/><polygon points="1150,373.5 1159,386 1141,386" fill="#e08d30" stroke="#f7c9a8" stroke-opacity="0.6" stroke-width="0.8"/><polygon points="1080,348.5 1089,361 1071,361" fill="#e08d30" stroke="#f7c9a8" stroke-opacity="0.6" stroke-width="0.8"/><polygon points="1080,383.5 1089,396 1071,396" fill="#e08d30" stroke="#f7c9a8" stroke-opacity="0.6" stroke-width="0.8"/><polygon points="1080,397.5 1089,410 1071,410" fill="#e08d30" stroke="#f7c9a8" stroke-opacity="0.6" stroke-width="0.8"/><polygon points="1080,453.5 1089,466 1071,466" fill="#e08d30" stroke="#f7c9a8" stroke-opacity="0.6" stroke-width="0.8"/><polygon points="879,412.5 888,425 870,425" fill="#e08d30" stroke="#f7c9a8" stroke-opacity="0.6" stroke-width="0.8"/><polygon points="810,456.5 819,469 801,469" fill="#e08d30" stroke="#f7c9a8" stroke-opacity="0.6" stroke-width="0.8"/><polygon points="1155,434.5 1164,447 1146,447" fill="#e08d30" stroke="#f7c9a8" stroke-opacity="0.6" stroke-width="0.8"/><polygon points="1168,503.5 1177,516 1159,516" fill="#e08d30" stroke="#f7c9a8" stroke-opacity="0.6" stroke-width="0.8"/><polygon points="983,530.5 992,543 974,543" fill="#d8512b" stroke="#f7c9a8" stroke-opacity="0.6" stroke-width="0.8"/><polygon points="1130,459.5 1139,472 1121,472" fill="#d8512b" stroke="#f7c9a8" stroke-opacity="0.6" stroke-width="0.8"/><polygon points="1140,453.5 1149,466 1131,466" fill="#d8512b" stroke="#f7c9a8" stroke-opacity="0.6" stroke-width="0.8"/><polygon points="1162,444.5 1171,457 1153,457" fill="#d8512b" stroke="#f7c9a8" stroke-opacity="0.6" stroke-width="0.8"/><polygon points="72,544.5 81,557 63,557" fill="#e08d30" stroke="#f7c9a8" stroke-opacity="0.6" stroke-width="0.8"/><polygon points="275,566.5 284,579 266,579" fill="#d8512b" stroke="#f7c9a8" stroke-opacity="0.6" stroke-width="0.8"/><polygon points="74,648.5 83,661 65,661" fill="#e08d30" stroke="#f7c9a8" stroke-opacity="0.6" stroke-width="0.8"/><polygon points="277,647.5 286,660 268,660" fill="#d8512b" stroke="#f7c9a8" stroke-opacity="0.6" stroke-width="0.8"/><polygon points="278,658.5 287,671 269,671" fill="#d8512b" stroke="#f7c9a8" stroke-opacity="0.6" stroke-width="0.8"/><polygon points="62,671.5 71,684 53,684" fill="#d8512b" stroke="#f7c9a8" stroke-opacity="0.6" stroke-width="0.8"/><polygon points="76,671.5 85,684 67,684" fill="#d8512b" stroke="#f7c9a8" stroke-opacity="0.6" stroke-width="0.8"/><polygon points="105,671.5 114,684 96,684" fill="#d8512b" stroke="#f7c9a8" stroke-opacity="0.6" stroke-width="0.8"/><polygon points="151,671.5 160,684 142,684" fill="#d8512b" stroke="#f7c9a8" stroke-opacity="0.6" stroke-width="0.8"/><polygon points="169,671.5 178,684 160,684" fill="#d8512b" stroke="#f7c9a8" stroke-opacity="0.6" stroke-width="0.8"/><polygon points="204,670.5 213,683 195,683" fill="#d8512b" stroke="#f7c9a8" stroke-opacity="0.6" stroke-width="0.8"/><polygon points="253,669.5 262,682 244,682" fill="#d8512b" stroke="#f7c9a8" stroke-opacity="0.6" stroke-width="0.8"/><polygon points="268,670.5 277,683 259,683" fill="#d8512b" stroke="#f7c9a8" stroke-opacity="0.6" stroke-width="0.8"/><polygon points="319,668.5 328,681 310,681" fill="#d8512b" stroke="#f7c9a8" stroke-opacity="0.6" stroke-width="0.8"/><polygon points="76,757.5 85,770 67,770" fill="#e08d30" stroke="#f7c9a8" stroke-opacity="0.6" stroke-width="0.8"/><polygon points="77,773.5 86,786 68,786" fill="#e08d30" stroke="#f7c9a8" stroke-opacity="0.6" stroke-width="0.8"/><polygon points="272,440.5 281,453 263,453" fill="#d8512b" stroke="#f7c9a8" stroke-opacity="0.6" stroke-width="0.8"/><polygon points="272,474.5 281,487 263,487" fill="#d8512b" stroke="#f7c9a8" stroke-opacity="0.6" stroke-width="0.8"/><polygon points="475,460.5 484,473 466,473" fill="#e08d30" stroke="#f7c9a8" stroke-opacity="0.6" stroke-width="0.8"/><polygon points="476,513.5 485,526 467,526" fill="#e08d30" stroke="#f7c9a8" stroke-opacity="0.6" stroke-width="0.8"/><polygon points="478,586.5 487,599 469,599" fill="#e08d30" stroke="#f7c9a8" stroke-opacity="0.6" stroke-width="0.8"/><polygon points="479,614.5 488,627 470,627" fill="#d8512b" stroke="#f7c9a8" stroke-opacity="0.6" stroke-width="0.8"/><polygon points="679,558.5 688,571 670,571" fill="#e08d30" stroke="#f7c9a8" stroke-opacity="0.6" stroke-width="0.8"/><polygon points="680,569.5 689,582 671,582" fill="#d8512b" stroke="#f7c9a8" stroke-opacity="0.6" stroke-width="0.8"/><polygon points="681,600.5 690,613 672,613" fill="#d8512b" stroke="#f7c9a8" stroke-opacity="0.6" stroke-width="0.8"/><polygon points="678,454.5 687,467 669,467" fill="#e08d30" stroke="#f7c9a8" stroke-opacity="0.6" stroke-width="0.8"/><polygon points="429,666.5 438,679 420,679" fill="#d8512b" stroke="#f7c9a8" stroke-opacity="0.6" stroke-width="0.8"/><polygon points="475,666.5 484,679 466,679" fill="#d8512b" stroke="#f7c9a8" stroke-opacity="0.6" stroke-width="0.8"/><polygon points="529,664.5 538,677 520,677" fill="#d8512b" stroke="#f7c9a8" stroke-opacity="0.6" stroke-width="0.8"/><polygon points="588,664.5 597,677 579,677" fill="#d8512b" stroke="#f7c9a8" stroke-opacity="0.6" stroke-width="0.8"/><polygon points="768,631.5 777,644 759,644" fill="#d8512b" stroke="#f7c9a8" stroke-opacity="0.6" stroke-width="0.8"/><polygon points="757,658.5 766,671 748,671" fill="#d8512b" stroke="#f7c9a8" stroke-opacity="0.6" stroke-width="0.8"/><polygon points="789,657.5 798,670 780,670" fill="#d8512b" stroke="#f7c9a8" stroke-opacity="0.6" stroke-width="0.8"/><polygon points="673,661.5 682,674 664,674" fill="#d8512b" stroke="#f7c9a8" stroke-opacity="0.6" stroke-width="0.8"/><polygon points="683,661.5 692,674 674,674" fill="#e08d30" stroke="#f7c9a8" stroke-opacity="0.6" stroke-width="0.8"/><polygon points="690,663.5 699,676 681,676" fill="#e08d30" stroke="#f7c9a8" stroke-opacity="0.6" stroke-width="0.8"/><polygon points="697,661.5 706,674 688,674" fill="#d8512b" stroke="#f7c9a8" stroke-opacity="0.6" stroke-width="0.8"/><polygon points="707,657.5 716,670 698,670" fill="#d8512b" stroke="#f7c9a8" stroke-opacity="0.6" stroke-width="0.8"/><polygon points="716,658.5 725,671 707,671" fill="#d8512b" stroke="#f7c9a8" stroke-opacity="0.6" stroke-width="0.8"/><polygon points="725,653.5 734,666 716,666" fill="#d8512b" stroke="#f7c9a8" stroke-opacity="0.6" stroke-width="0.8"/><polygon points="733,661.5 742,674 724,674" fill="#d8512b" stroke="#f7c9a8" stroke-opacity="0.6" stroke-width="0.8"/><polygon points="700,671.5 709,684 691,684" fill="#d8512b" stroke="#f7c9a8" stroke-opacity="0.6" stroke-width="0.8"/><polygon points="481,711.5 490,724 472,724" fill="#e08d30" stroke="#f7c9a8" stroke-opacity="0.6" stroke-width="0.8"/><polygon points="482,766.5 491,779 473,779" fill="#d8512b" stroke="#f7c9a8" stroke-opacity="0.6" stroke-width="0.8"/><polygon points="482,781.5 491,794 473,794" fill="#e08d30" stroke="#f7c9a8" stroke-opacity="0.6" stroke-width="0.8"/><polygon points="608,707.5 617,720 599,720" fill="#e08d30" stroke="#f7c9a8" stroke-opacity="0.6" stroke-width="0.8"/><polygon points="564,727.5 573,740 555,740" fill="#d8512b" stroke="#f7c9a8" stroke-opacity="0.6" stroke-width="0.8"/><polygon points="669,679.5 678,692 660,692" fill="#d8512b" stroke="#f7c9a8" stroke-opacity="0.6" stroke-width="0.8"/><polygon points="683,707.5 692,720 674,720" fill="#e08d30" stroke="#f7c9a8" stroke-opacity="0.6" stroke-width="0.8"/><polygon points="684,774.5 693,787 675,787" fill="#e08d30" stroke="#f7c9a8" stroke-opacity="0.6" stroke-width="0.8"/><polygon points="865,585.5 874,598 856,598" fill="#d8512b" stroke="#f7c9a8" stroke-opacity="0.6" stroke-width="0.8"/><polygon points="853,590.5 862,603 844,603" fill="#d8512b" stroke="#f7c9a8" stroke-opacity="0.6" stroke-width="0.8"/><polygon points="819,606.5 828,619 810,619" fill="#d8512b" stroke="#f7c9a8" stroke-opacity="0.6" stroke-width="0.8"/><polygon points="837,657.5 846,670 828,670" fill="#d8512b" stroke="#f7c9a8" stroke-opacity="0.6" stroke-width="0.8"/><polygon points="883,658.5 892,671 874,671" fill="#e08d30" stroke="#f7c9a8" stroke-opacity="0.6" stroke-width="0.8"/><polygon points="884,669.5 893,682 875,682" fill="#e08d30" stroke="#f7c9a8" stroke-opacity="0.6" stroke-width="0.8"/><polygon points="903,657.5 912,670 894,670" fill="#d8512b" stroke="#f7c9a8" stroke-opacity="0.6" stroke-width="0.8"/><polygon points="949,653.5 958,666 940,666" fill="#d8512b" stroke="#f7c9a8" stroke-opacity="0.6" stroke-width="0.8"/><polygon points="964,648.5 973,661 955,661" fill="#d8512b" stroke="#f7c9a8" stroke-opacity="0.6" stroke-width="0.8"/><polygon points="1056,655.5 1065,668 1047,668" fill="#d8512b" stroke="#f7c9a8" stroke-opacity="0.6" stroke-width="0.8"/><polygon points="1077,655.5 1086,668 1068,668" fill="#d8512b" stroke="#f7c9a8" stroke-opacity="0.6" stroke-width="0.8"/><polygon points="1092,655.5 1101,668 1083,668" fill="#e08d30" stroke="#f7c9a8" stroke-opacity="0.6" stroke-width="0.8"/><polygon points="1143,653.5 1152,666 1134,666" fill="#e08d30" stroke="#f7c9a8" stroke-opacity="0.6" stroke-width="0.8"/><polygon points="1086,594.5 1095,607 1077,607" fill="#e08d30" stroke="#f7c9a8" stroke-opacity="0.6" stroke-width="0.8"/><polygon points="1085,612.5 1094,625 1076,625" fill="#e08d30" stroke="#f7c9a8" stroke-opacity="0.6" stroke-width="0.8"/><polygon points="1085,631.5 1094,644 1076,644" fill="#e08d30" stroke="#f7c9a8" stroke-opacity="0.6" stroke-width="0.8"/><polygon points="1086,685.5 1095,698 1077,698" fill="#e08d30" stroke="#f7c9a8" stroke-opacity="0.6" stroke-width="0.8"/><polygon points="1086,704.5 1095,717 1077,717" fill="#e08d30" stroke="#f7c9a8" stroke-opacity="0.6" stroke-width="0.8"/><polygon points="886,743.5 895,756 877,756" fill="#e08d30" stroke="#f7c9a8" stroke-opacity="0.6" stroke-width="0.8"/><polygon points="1088,775.5 1097,788 1079,788" fill="#e08d30" stroke="#f7c9a8" stroke-opacity="0.6" stroke-width="0.8"/><path d="M640 475Q628 461 628 455.5A12 12 0 0 1 652 455.5Q652 461 640 475Z" fill="#1c1c1e" stroke="#fff" stroke-width="1"/><path d="M634 456L640 450.5L646 456V461H634Z" fill="#fff"/><rect x="638.5" y="457.5" width="3" height="3.5" fill="#1c1c1e"/></svg></div>
<div class="dd" style="left:57px;width:213px">Use a Saved Area</div><svg style="position:absolute;left:248px;top:127px" width="14" height="9"><polyline points="1,1 7,7 13,1" fill="none" stroke="#8a8a8a" stroke-width="1.3"/></svg><div class="dd" style="left:284px;width:213px">Show Geographies</div><svg style="position:absolute;left:474px;top:127px" width="14" height="9"><polyline points="1,1 7,7 13,1" fill="none" stroke="#8a8a8a" stroke-width="1.3"/></svg><div class="btn" style="left:850px;width:145px;background:#2e6ebf;color:#fff;font-size:14.4px">Edit Traffic Counts</div><div class="btn" style="left:1009px;width:150px;background:#fff;color:#3a6cb0;border:1px solid #d5dbe6;font-size:14px">Search in This Area</div><div id="legend"><div id="lh">Median Sold Price</div><div class="lr" style="top:50.0px;background:#8571ab"></div><div class="lt" style="top:49.8px">+$417K</div><div class="lr" style="top:75.7px;background:#9675c0"></div><div class="lt" style="top:75.5px">$351K - $416K</div><div class="lr" style="top:101.3px;background:#a277d0"></div><div class="lt" style="top:101.1px">$319K - $350K</div><div class="lr" style="top:127.0px;background:#ac75dc"></div><div class="lt" style="top:126.8px">$286K - $318K</div><div class="lr" style="top:152.6px;background:#c17bf2"></div><div class="lt" style="top:152.4px">$270K - $285K</div><div class="lr" style="top:178.2px;background:#cb86f4"></div><div class="lt" style="top:178.1px">$253K - $269K</div><div class="lr" style="top:203.9px;background:#d699f4"></div><div class="lt" style="top:203.7px">$220K - $252K</div><div class="lr" style="top:229.6px;background:#e0aff5"></div><div class="lt" style="top:229.4px">$188K - $219K</div><div class="lr" style="top:255.2px;background:#eac5f7"></div><div class="lt" style="top:255.0px">$122K - $187K</div><div class="lr" style="top:280.8px;background:#f2d9f9"></div><div class="lt" style="top:280.6px">$106K - $121K</div><div class="lr" style="top:306.5px;background:#f8e9fa"></div><div class="lt" style="top:306.3px">$90K - $105K</div></div><div id="pop"><svg style="position:absolute;left:41px;top:17px" width="18" height="16"><path d="M9 1.5 L16.8 15 L1.2 15 Z" fill="none" stroke="#555" stroke-width="1.4" stroke-linejoin="round"/><line x1="9" y1="6" x2="9" y2="10.5" stroke="#555" stroke-width="1.5"/><circle cx="9" cy="12.7" r="0.9" fill="#555"/></svg><div class="t" style="left:63px;top:19px;font-size:14px;color:#555">Daily Traffic Counts</div><div class="t" style="left:20px;top:53px;font-size:14px">Street: <b style="font-size:13.4px">South Pulaski Road</b></div><div class="t" style="left:20px;top:79px;font-size:14px">Cross: <b style="font-size:13.4px">W 16th St</b></div><div class="t" style="left:20px;top:104px;font-size:14px">Cross Direction: <b>N</b></div><div style="position:absolute;left:20px;top:136px;width:188px;height:1px;background:#c8c8cc"></div><div class="t" style="left:20px;top:161px;font-size:20px">2025</div><svg style="position:absolute;left:76px;top:160px" width="30" height="22"><polygon points="15,0.5 29.5,21.5 0.5,21.5" fill="#e08a3a"/></svg><div class="t" style="left:115px;top:155px;font-size:28px">14,279</div><div class="t" style="left:199px;top:154px;font-size:18px">*</div><div style="position:absolute;left:20px;top:206px;width:188px;height:1px;background:#c5d0e0"></div><div class="t" style="left:20px;top:224px;font-size:14.3px;color:#3a74bd">Show Historical Counts</div><div class="t" style="left:20px;top:251px;font-size:11.5px">* Estimate</div><svg style="position:absolute;left:100px;top:279px" width="26" height="14"><polygon points="0,0 26,0 13,13" fill="#fff"/></svg></div><div id="side"></div><svg style="position:absolute;left:0;top:0;z-index:3" width="1280" height="800"><circle cx="1205" cy="124.3" r="11" fill="none" stroke="#5c636d" stroke-width="1.6"/><path d="M1200 124.3H1210M1205 119.3V129.3" stroke="#5c636d" stroke-width="1.7"/><circle cx="1205" cy="173.8" r="11" fill="none" stroke="#5c636d" stroke-width="1.6"/><path d="M1200 173.8H1210" stroke="#5c636d" stroke-width="1.7"/><g stroke="#c9cdd3" fill="none" stroke-width="1.5"><circle cx="1205" cy="223.3" r="8.5"/><circle cx="1205" cy="223.3" r="4"/><path d="M1205 212V215M1205 231.6V234.6M1193.7 223.3H1196.7M1213.3 223.3H1216.3"/></g><g stroke="#5c636d" fill="none" stroke-width="1.6" stroke-linejoin="round"><path d="M1198 266L1212 280M1212 266L1198 280"/><path d="M1195.8 264.3H1202L1195.8 270.5Z M1214.2 264.3H1208L1214.2 270.5Z M1195.8 282.2H1202L1195.8 276Z M1214.2 282.2H1208L1214.2 276Z"/></g><path d="M1194.5 315.5L1201.5 312.8L1208.5 315.5L1215.5 312.8V331L1208.5 333.7L1201.5 331L1194.5 333.7Z M1201.5 312.8V331 M1208.5 315.5V333.7" fill="none" stroke="#5c636d" stroke-width="1.6" stroke-linejoin="round"/><path d="M1195 397.5L1196.5 390.5L1210 377L1215 382L1201.5 395.5Z M1207.5 379.5L1212.5 384.5 M1196.5 390.5L1201.5 395.5" fill="none" stroke="#5c636d" stroke-width="1.6" stroke-linejoin="round"/><rect x="1174" y="427" width="63" height="63.5" fill="#2e6dc0"/><g fill="none" stroke="#fff" stroke-width="1.7" stroke-linejoin="round" stroke-linecap="round"><path d="M1195.5 457.5H1191.5V452Q1191.5 449 1195 448.7L1198.5 448.5L1203 442.3H1214.5L1218.5 448.7Q1220 449.5 1220 451.5V457.5H1216M1209 457.5H1202"/><path d="M1198.5 448.5H1218.5M1209.5 442.5V448.5"/><circle cx="1198.7" cy="457.7" r="3"/><circle cx="1212.5" cy="457.7" r="3"/></g><path d="M1205.5 525.5Q1197 516 1197 512.5A8.5 8.5 0 0 1 1214 512.5Q1214 516 1205.5 525.5Z" fill="none" stroke="#5c636d" stroke-width="1.6" stroke-linejoin="round"/><circle cx="1205.5" cy="512.3" r="2.8" fill="none" stroke="#5c636d" stroke-width="1.6"/><path d="M1191.5 575L1205 569.8L1218.5 575L1205 580.2Z M1196 577V584Q1200 588.5 1205 588.5Q1210 588.5 1214 584V577 M1193.5 576V586" fill="none" stroke="#5c636d" stroke-width="1.6" stroke-linejoin="round"/><path d="M1194 637L1204.5 632L1215 637L1204.5 642Z M1194 642.5L1204.5 647.5L1215 642.5 M1194 647.5L1204.5 652.5L1215 647.5" fill="none" stroke="#5c636d" stroke-width="1.6" stroke-linejoin="round"/><circle cx="1222" cy="637" r="9" fill="#3d7cc9" stroke="#fff" stroke-width="1.5"/><path d="M1218 637.2L1221 640L1226 634.5" fill="none" stroke="#fff" stroke-width="1.6"/><g fill="none" stroke="#5c636d" stroke-width="1.6"><rect x="1194.5" y="707.5" width="3.2" height="3.2"/><rect x="1194.5" y="715" width="3.2" height="3.2"/><rect x="1194.5" y="722.5" width="3.2" height="3.2"/><path d="M1201.5 709.1H1216.5M1201.5 716.6H1216.5M1201.5 724.1H1216.5"/></g></svg><div class="sl" style="left:1173px;top:338.5px;color:#59606b;z-index:4">View</div><div class="sl" style="left:1173px;top:403.5px;color:#59606b;z-index:4">Draw</div><div class="sl" style="left:1173px;top:467.5px;color:#fff;z-index:4">Driving</div><div class="sl" style="left:1173px;top:530.0px;color:#59606b;z-index:4">POIs</div><div class="sl" style="left:1173px;top:593.5px;color:#59606b;z-index:4">Schools</div><div class="sl" style="left:1173px;top:657.5px;color:#59606b;z-index:4">Data</div><div class="sl" style="left:1173px;top:669.5px;color:#59606b;z-index:4">Layers</div><div class="sl" style="left:1173px;top:734.0px;color:#59606b;z-index:4">Legend</div></body></html>
